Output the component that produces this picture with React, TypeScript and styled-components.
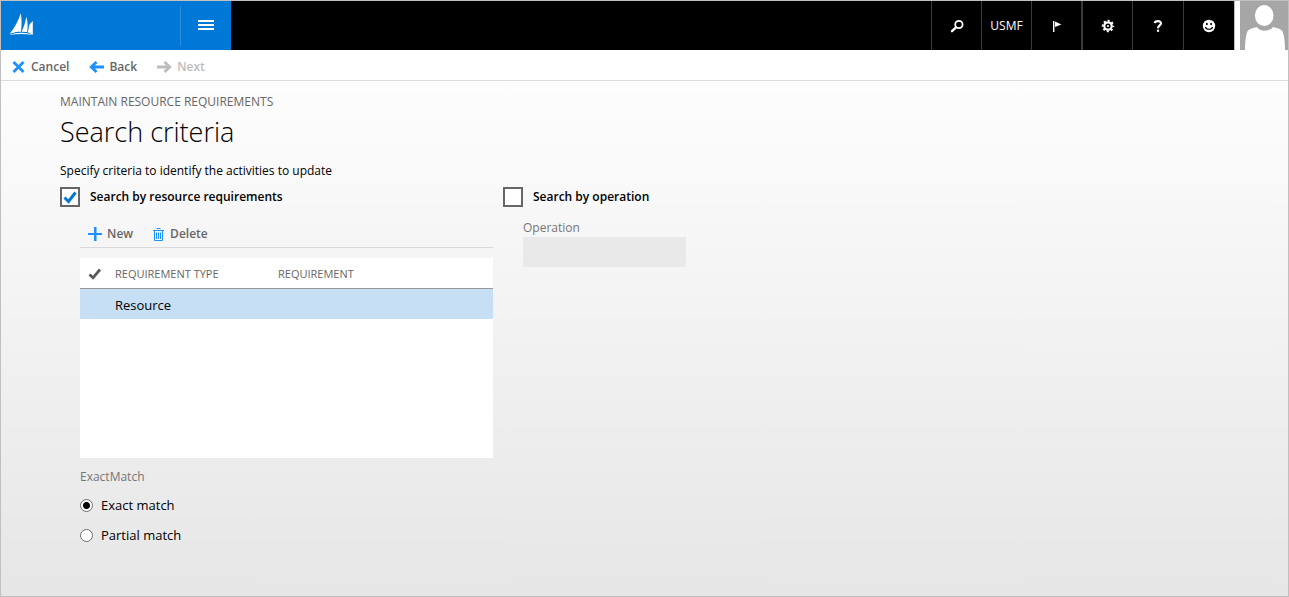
import React, { useState } from "react";
import styled, { createGlobalStyle } from "styled-components";

const GlobalStyle = createGlobalStyle`
  *, *::before, *::after { box-sizing: border-box; }
  body {
    margin: 0;
    color: #000;
    font-family: "Segoe UI", "Open Sans", "Noto Sans", sans-serif;
    font-size: 12px;
    line-height: 16px;
  }
  button, input { font: inherit; color: inherit; }
`;

const Page = styled.div`
  display: flex;
  flex-direction: column;
  min-height: 100vh;
  border: 1px solid #c0c0c0;
  background: #fff;
`;

const TopBar = styled.header`
  display: flex;
  height: 49px;
  background: #000;
  color: #fff;
`;

const Brand = styled.div`
  display: flex;
  align-items: center;
  width: 230px;
  background: #0078d7;
`;

const LogoLink = styled.a`
  display: flex;
  align-items: center;
  flex: 1;
  height: 40px;
  padding: 0 0 2px 8px;
  border-right: 1px solid #2b8fde;
`;

const MenuButton = styled.button`
  display: flex;
  align-items: center;
  justify-content: center;
  width: 50px;
  height: 100%;
  padding: 0 0 2px;
  border: 0;
  background: none;
`;

const TopActions = styled.nav`
  display: flex;
  margin-left: auto;
`;

const TopButton = styled.button<{ $divider?: number; $wide?: boolean }>`
  display: flex;
  align-items: center;
  justify-content: center;
  width: ${(p) => (p.$wide ? 51 : 50)}px;
  padding: 0;
  border: 0;
  border-left: ${(p) => p.$divider ?? 1}px solid #3a3a3a;
  background: none;
  white-space: nowrap;
`;

const Avatar = styled.button`
  display: flex;
  width: 54px;
  padding: 0 0 0 5px;
  border: 0;
  border-left: 1px solid #bdbdbd;
  background: #fff;
`;

const ActionBar = styled.div`
  display: flex;
  align-items: center;
  gap: 20px;
  height: 31px;
  padding: 3px 11px 0;
  border-bottom: 1px solid #dcdcdc;
`;

const ActionButton = styled.button<{ $gap: number }>`
  display: flex;
  align-items: center;
  gap: ${(p) => p.$gap}px;
  padding: 0;
  border: 0;
  background: none;
  color: #666;
  font-weight: 600;
  &:disabled { color: #bdbdbd; }
`;

const Content = styled.main`
  flex: 1;
  padding: 12px 59px 24px;
  background: linear-gradient(#fdfdfd, #e6e6e6);
`;

const Caption = styled.div`
  color: #666;
  line-height: 18px;
`;

const Title = styled.h1`
  margin: 3px 0 12px;
  font-size: 27px;
  font-weight: 300;
  line-height: 36px;
`;

const Intro = styled.p`
  margin: 0 0 7px;
  line-height: 18px;
`;

const Columns = styled.div`
  display: flex;
  align-items: flex-start;
  gap: 10px;
`;

const Section = styled.section<{ $width: number }>`
  width: ${(p) => p.$width}px;
`;

const CheckLabel = styled.label`
  display: flex;
  align-items: center;
  gap: 10px;
  height: 20px;
  font-weight: 600;
  line-height: 18px;
`;

const CheckBox = styled.input`
  appearance: none;
  width: 20px;
  height: 20px;
  margin: 0;
  border: 2px solid #666;
  background: #fff;
`;

const CheckHolder = styled.span`
  position: relative;
  display: flex;
  svg { position: absolute; top: 0; left: 0; pointer-events: none; }
`;

const Indented = styled.div`
  padding-left: 20px;
`;

const GridTools = styled.div`
  display: flex;
  align-items: center;
  gap: 20px;
  height: 29px;
  margin: 12px 0 10px;
  padding: 2px 8px 0;
  border-bottom: 1px solid #d9d9d9;
`;

const GridBox = styled.div`
  min-height: 200px;
  background: #fff;
`;

const Grid = styled.table`
  width: 100%;
  table-layout: fixed;
  border-collapse: separate;
  border-spacing: 0;
`;

const HeadCell = styled.th<{ $width?: number }>`
  width: ${(p) => (p.$width ? `${p.$width}px` : "auto")};
  height: 31px;
  padding: 2px 0 0;
  border-bottom: 1px solid #999;
  color: #666;
  font-size: 11px;
  font-weight: 500;
  text-align: left;
`;

const MarkCell = styled(HeadCell)`
  padding-left: 8px;
  svg { display: block; }
`;

const Cell = styled.td`
  height: 30px;
  padding: 2px 0 0;
  background: #c7dff4;
  font-size: 13px;
`;

const Choices = styled.fieldset`
  margin: 0;
  padding: 11px 0 0;
  border: 0;
`;

const Legend = styled.legend`
  float: left;
  width: 100%;
  padding: 0;
  margin-bottom: 5px;
  color: #767676;
  line-height: 16px;
`;

const Choice = styled.label`
  clear: both;
  display: flex;
  align-items: center;
  gap: 8px;
  height: 30px;
  font-size: 13px;
`;

const Radio = styled.input`
  appearance: none;
  width: 13px;
  height: 13px;
  margin: 0;
  border: 1px solid #707070;
  border-radius: 50%;
  background: #fff;
  &:checked { background: radial-gradient(circle, #000 3px, #fff 4px); }
`;

const FieldLabel = styled.label`
  display: block;
  margin-top: 12px;
  color: #767676;
  line-height: 18px;
`;

const TextField = styled.input`
  display: block;
  width: 163px;
  height: 30px;
  padding: 0 8px;
  border: 0;
  background: #e9e9e9;
`;

const Logo = () => (
  <svg width="24" height="23" viewBox="0 0 24 23" fill="#fff" aria-hidden="true">
    <path d="M11.800 .3 C9.500 7.500 6 14.500 .6 20.800 C4 19.300 8 18.700 12 18.700 C12.800 12.500 12.800 6 11.800 .3Z" />
    <path d="M17.400 3.800 C16.400 9 14.900 14 12.700 18.700 L18 19 C19 14 18.800 8.500 17.400 3.800Z" />
    <path d="M23.800 8 C22 9.500 20.800 11 20 13 C19.900 15.200 19.400 17.200 18.600 19.200 L23.800 21.800Z" />
    <path d="M.3 22 C7 19 17 18.800 23.800 22 C16 20.600 8 20.600 .3 22Z" />
  </svg>
);

const Burger = () => (
  <svg width="16" height="10" viewBox="0 0 16 10" fill="#fff" aria-hidden="true">
    <path d="M0 0h16v2H0zM0 4h16v2H0zM0 8h16v2H0z" />
  </svg>
);

const SearchIcon = () => (
  <svg width="14" height="14" viewBox="0 0 14 14" fill="none" stroke="#fff" aria-hidden="true">
    <circle cx="8.900" cy="5.500" r="3.700" strokeWidth="1.800" />
    <path d="M6 8.400 L2 12.200" strokeWidth="2.400" strokeLinecap="round" />
  </svg>
);

const FlagIcon = () => (
  <svg width="10" height="12" viewBox="0 0 10 12" fill="#fff" aria-hidden="true">
    <path d="M1 1h1.400v11H1zM3 1.400 L9.400 4.400 L3 7z" />
  </svg>
);

const GearIcon = () => (
  <svg width="14" height="14" viewBox="0 0 14 14" fill="none" stroke="#fff" aria-hidden="true">
    <circle cx="7" cy="7" r="3.700" strokeWidth="2.200" />
    <circle cx="7" cy="7" r="5.300" strokeWidth="1.800" strokeDasharray="2.080 2.080" strokeDashoffset="1.040" />
    <circle cx="7" cy="7" r="1.100" fill="#fff" stroke="none" />
  </svg>
);

const HelpIcon = () => (
  <svg width="10" height="14" viewBox="0 0 10 14" fill="none" stroke="#fff" aria-hidden="true">
    <path d="M1.800 4.200 C2 1.400 8 1.200 8 4.300 C8 6.500 5 6.300 5 9.200" strokeWidth="2.200" />
    <rect x="3.900" y="10.600" width="2.200" height="2.200" fill="#fff" stroke="none" />
  </svg>
);

const SmileIcon = () => (
  <svg width="14" height="14" viewBox="0 0 14 14" aria-hidden="true">
    <circle cx="7" cy="7" r="6.200" fill="#fff" />
    <ellipse cx="4.900" cy="5" rx=".9" ry="1.200" />
    <ellipse cx="9.100" cy="5" rx=".9" ry="1.200" />
    <path d="M3.400 8 C4.400 11 9.600 11 10.600 8" fill="none" stroke="#000" strokeWidth="1.200" />
  </svg>
);

const PersonIcon = () => (
  <svg width="48" height="49" viewBox="0 0 48 49" aria-hidden="true">
    <rect width="48" height="49" fill="#a6a6a6" />
    <ellipse cx="24.200" cy="14.500" rx="9.300" ry="10.500" fill="#fff" />
    <path
      d="M5 49 C5 43 5.400 37 7 31.500 C8 28 13 27 17 26 C20 31 29 31 33 26 C37 27 42 28 43 31.500 C44.600 37 45 43 45 49Z"
      fill="#fff"
    />
  </svg>
);

const CrossIcon = () => (
  <svg width="13" height="12" viewBox="0 0 13 12" stroke="#1e90ff" strokeWidth="2.800" aria-hidden="true">
    <path d="M1.500 1 L11.500 11 M11.500 1 L1.500 11" />
  </svg>
);

const ArrowIcon = ({ color, flip }: { color: string; flip?: boolean }) => (
  <svg width="15" height="12" viewBox="0 0 15 12" fill="none" stroke={color} aria-hidden="true">
    <path
      d={flip ? "M0 6 H12.500 M7.500 1 L12.800 6 L7.500 11" : "M15 6 H2.500 M7.500 1 L2.200 6 L7.500 11"}
      strokeWidth="2.800"
    />
  </svg>
);

const PlusIcon = () => (
  <svg width="14" height="14" viewBox="0 0 14 14" fill="#1e90ff" aria-hidden="true">
    <path d="M6 0h2.500v6h5.500v2H8.500v6H6V8H0V6h6z" />
  </svg>
);

const TrashIcon = () => (
  <svg width="11" height="13" viewBox="0 0 11 13" fill="none" stroke="#1e90ff" aria-hidden="true">
    <path d="M0 2.500H11M3.500 .5H7.500M1.500 3V12.500H9.500V3M3.500 4.500V11M5.500 4.500V11M7.500 4.500V11" />
  </svg>
);

const TickIcon = () => (
  <svg width="20" height="20" viewBox="0 0 20 20" fill="none" stroke="#0078d7" strokeWidth="3" aria-hidden="true">
    <path d="M4.500 10.500 L8.500 14.500 L15.500 5.500" />
  </svg>
);

const MarkIcon = () => (
  <svg width="14" height="12" viewBox="0 0 14 12" fill="none" stroke="#5a5a5a" strokeWidth="2.800" aria-hidden="true">
    <path d="M1.500 6.500 L5 9.800 L12 1.500" />
  </svg>
);

export default function App() {
  const [byResource, setByResource] = useState(true);
  const [byOperation, setByOperation] = useState(false);
  const [match, setMatch] = useState("exact");

  return (
    <>
      <GlobalStyle />
      <Page>
        <TopBar>
          <Brand>
            <LogoLink href="#" aria-label="Home"><Logo /></LogoLink>
            <MenuButton aria-label="Menu"><Burger /></MenuButton>
          </Brand>
          <TopActions>
            <TopButton aria-label="Search"><SearchIcon /></TopButton>
            <TopButton>USMF</TopButton>
            <TopButton aria-label="Messages"><FlagIcon /></TopButton>
            <TopButton $divider={2} $wide aria-label="Settings"><GearIcon /></TopButton>
            <TopButton $wide aria-label="Help"><HelpIcon /></TopButton>
            <TopButton $wide aria-label="Feedback"><SmileIcon /></TopButton>
            <Avatar aria-label="Account"><PersonIcon /></Avatar>
          </TopActions>
        </TopBar>

        <ActionBar>
          <ActionButton $gap={6}><CrossIcon />Cancel</ActionButton>
          <ActionButton $gap={5}><ArrowIcon color="#1e90ff" />Back</ActionButton>
          <ActionButton $gap={5} disabled><ArrowIcon color="#bdbdbd" flip />Next</ActionButton>
        </ActionBar>

        <Content>
          <Caption>MAINTAIN RESOURCE REQUIREMENTS</Caption>
          <Title>Search criteria</Title>
          <Intro>Specify criteria to identify the activities to update</Intro>

          <Columns>
            <Section $width={433}>
              <CheckLabel>
                <CheckHolder>
                  <CheckBox type="checkbox" checked={byResource} onChange={(e) => setByResource(e.target.checked)} />
                  {byResource && <TickIcon />}
                </CheckHolder>
                Search by resource requirements
              </CheckLabel>
              <Indented>
                <GridTools>
                  <ActionButton $gap={5}><PlusIcon />New</ActionButton>
                  <ActionButton $gap={6}><TrashIcon />Delete</ActionButton>
                </GridTools>
                <GridBox>
                  <Grid>
                    <thead>
                      <tr>
                        <MarkCell $width={35} aria-label="Selected"><MarkIcon /></MarkCell>
                        <HeadCell $width={163}>REQUIREMENT TYPE</HeadCell>
                        <HeadCell>REQUIREMENT</HeadCell>
                      </tr>
                    </thead>
                    <tbody>
                      <tr>
                        <Cell />
                        <Cell>Resource</Cell>
                        <Cell />
                      </tr>
                    </tbody>
                  </Grid>
                </GridBox>
                <Choices>
                  <Legend>ExactMatch</Legend>
                  <Choice>
                    <Radio type="radio" name="match" checked={match === "exact"} onChange={() => setMatch("exact")} />
                    Exact match
                  </Choice>
                  <Choice>
                    <Radio type="radio" name="match" checked={match === "partial"} onChange={() => setMatch("partial")} />
                    Partial match
                  </Choice>
                </Choices>
              </Indented>
            </Section>

            <Section $width={183}>
              <CheckLabel>
                <CheckHolder>
                  <CheckBox type="checkbox" checked={byOperation} onChange={(e) => setByOperation(e.target.checked)} />
                  {byOperation && <TickIcon />}
                </CheckHolder>
                Search by operation
              </CheckLabel>
              <Indented>
                <FieldLabel htmlFor="operation">Operation</FieldLabel>
                <TextField id="operation" type="text" disabled={!byOperation} />
              </Indented>
            </Section>
          </Columns>
        </Content>
      </Page>
    </>
  );
}
